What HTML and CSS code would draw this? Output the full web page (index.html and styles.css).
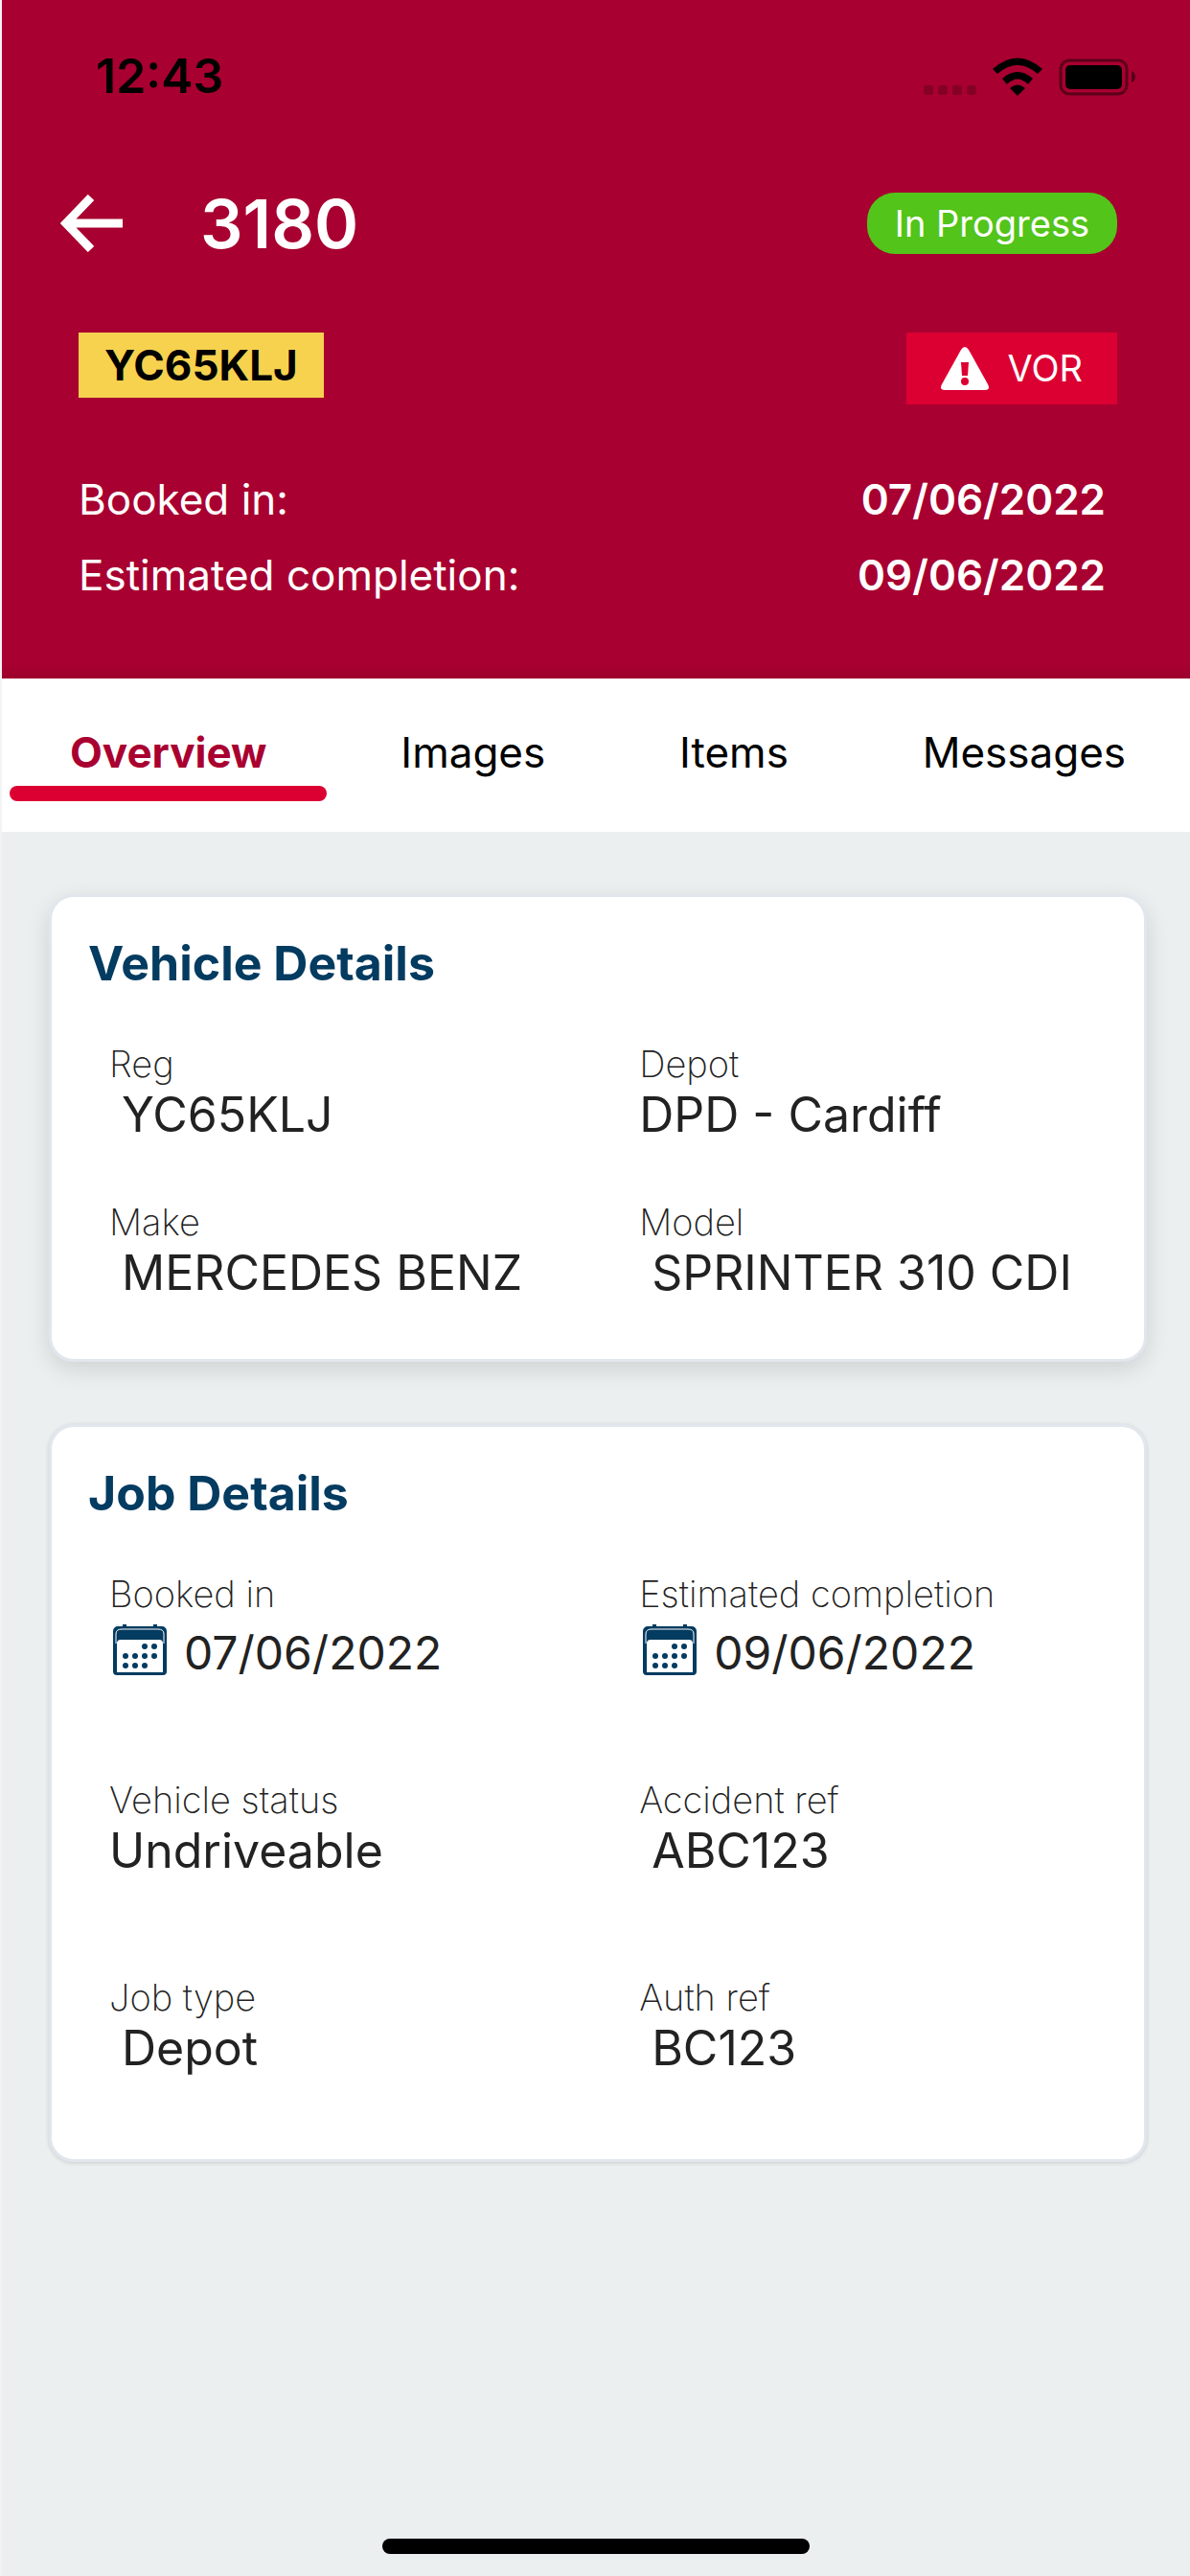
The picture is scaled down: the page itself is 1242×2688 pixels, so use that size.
FILE: index.html
```html
<!DOCTYPE html>
<html lang="en">
<head>
  <meta charset="UTF-8">
  <meta name="viewport" content="width=device-width, initial-scale=1">
  <title>Job 3180</title>
  <link rel="stylesheet" href="styles.css">
</head>
<body>
  <svg class="sprite" aria-hidden="true">
    <symbol id="calendar" viewBox="0 0 56 54">
      <path fill="#043b60" d="M10 0h4v2h28V0h4v2h5a5 5 0 0 1 5 5v42a4 4 0 0 1-4 4H4a4 4 0 0 1-4-4V7a5 5 0 0 1 5-5h5z"/>
      <path fill="#fff" d="M4 20q0-4 4-4h40q4 0 4 4v30H4z"/>
      <path fill="none" stroke="#fff" d="M3 20V10q0-5 6-5h38q6 0 6 5v10"/>
      <g fill="#043b60">
        <circle cx="33" cy="23" r="3"/><circle cx="43" cy="23" r="3"/>
        <circle cx="13" cy="33" r="3"/><circle cx="23" cy="33" r="3"/><circle cx="33" cy="33" r="3"/><circle cx="43" cy="33" r="3"/>
        <circle cx="13" cy="43" r="3"/><circle cx="23" cy="43" r="3"/><circle cx="33" cy="43" r="3"/>
      </g>
    </symbol>
  </svg>

  <header class="header">
    <div class="status-bar">
      <span class="time">12:43</span>
      <svg class="status-icons" viewBox="0 0 222 50" aria-hidden="true">
        <g opacity=".2">
          <rect x="0" y="35" width="10" height="10" rx="3"/>
          <rect x="15" y="35" width="10" height="10" rx="3"/>
          <rect x="30" y="35" width="10" height="10" rx="3"/>
          <rect x="45" y="35" width="10" height="10" rx="3"/>
        </g>
        <path d="M72 18Q98-5 124 18L119 23Q98 5 77 23z"/>
        <path d="M82 28Q98 14 114 28L109 34Q98 23 87 34z"/>
        <path d="M90 38Q98 31 106 38L98 46z"/>
        <rect x="143" y="9" width="69" height="35" rx="9" fill="none" stroke="#000" stroke-width="3" opacity=".45"/>
        <rect x="148" y="14" width="59" height="25" rx="5"/>
        <path d="M217 20q4 2 4 6t-4 6z" opacity=".5"/>
      </svg>
    </div>

    <div class="title-row">
      <button class="back" type="button" aria-label="Back">
        <svg viewBox="0 0 66 60" aria-hidden="true">
          <path d="M32 3L6 30l26 27M6 30h59" fill="none" stroke="#fff" stroke-width="9"/>
        </svg>
      </button>
      <h1>3180</h1>
      <span class="progress">In Progress</span>
    </div>

    <div class="tag-row">
      <span class="plate">YC65KLJ</span>
      <span class="vor">
        <svg viewBox="0 0 50 46" aria-hidden="true">
          <path fill="#fff" d="M21 3q4-6 8 0l20 36q3 6-3 6H4q-6 0-3-6z"/>
          <path fill="#dc0032" d="M21 16h8l-1 14h-6z"/>
          <circle cx="25" cy="36" r="4" fill="#dc0032"/>
        </svg>
        VOR
      </span>
    </div>

    <dl class="dates">
      <div><dt>Booked in:</dt><dd>07/06/2022</dd></div>
      <div><dt>Estimated completion:</dt><dd>09/06/2022</dd></div>
    </dl>
  </header>

  <nav class="tabs">
    <a class="tab active" href="#overview">Overview</a>
    <a class="tab" href="#images">Images</a>
    <a class="tab" href="#items">Items</a>
    <a class="tab" href="#messages">Messages</a>
  </nav>

  <main class="content" id="overview">
    <section class="card raised">
      <h2>Vehicle Details</h2>
      <dl class="details">
        <div><dt>Reg</dt><dd class="indent">YC65KLJ</dd></div>
        <div><dt>Depot</dt><dd>DPD - Cardiff</dd></div>
        <div><dt>Make</dt><dd class="indent">MERCEDES BENZ</dd></div>
        <div><dt>Model</dt><dd class="indent">SPRINTER 310 CDI</dd></div>
      </dl>
    </section>

    <section class="card">
      <h2>Job Details</h2>
      <dl class="details job">
        <div><dt>Booked in</dt><dd class="date"><svg aria-hidden="true"><use href="#calendar"/></svg>07/06/2022</dd></div>
        <div><dt>Estimated completion</dt><dd class="date"><svg aria-hidden="true"><use href="#calendar"/></svg>09/06/2022</dd></div>
        <div><dt>Vehicle status</dt><dd>Undriveable</dd></div>
        <div><dt>Accident ref</dt><dd class="indent">ABC123</dd></div>
        <div><dt>Job type</dt><dd class="indent">Depot</dd></div>
        <div><dt>Auth ref</dt><dd class="indent">BC123</dd></div>
      </dl>
    </section>
  </main>

  <div class="home-bar"></div>
</body>
</html>
```

FILE: styles.css
```css
* {
  box-sizing: border-box;
}

body {
  margin: 0;
  min-height: 100vh;
  display: flex;
  flex-direction: column;
  font-family: Inter, "Liberation Sans", sans-serif;
  background: #ebeff0;
  border-left: 2px solid #f3f3f4;
  color: #222;
}

h1, h2, dl, dd {
  margin: 0;
}

.sprite {
  display: none;
}

/* header */
.header {
  background: linear-gradient(#a80030 98%, #9c002d);
  color: #fff;
  padding: 49px 76px 68px 80px;
}

.status-bar {
  display: flex;
  justify-content: space-between;
  align-items: center;
  height: 60px;
  margin: 0 -20px 0 18px;
  color: #000;
}

.time {
  font-size: 50px;
  font-weight: 600;
}

.status-icons {
  width: 222px;
  height: 50px;
}

.title-row {
  display: flex;
  align-items: center;
  height: 84px;
  margin-top: 82px;
}

.back {
  width: 66px;
  height: 60px;
  margin-left: -19px;
  padding: 0;
  border: 0;
  background: none;
}

.back svg {
  display: block;
  width: 66px;
  height: 60px;
}

h1 {
  margin-left: 80px;
  font-size: 70px;
  font-weight: 600;
}

.progress {
  margin-left: auto;
  padding: 0 29px;
  border-radius: 29px;
  background: #52c41a;
  font-size: 38px;
  line-height: 64px;
}

.tag-row {
  display: flex;
  justify-content: space-between;
  align-items: flex-start;
  margin-top: 72px;
}

.plate {
  padding: 0 27px;
  background: #f7d24f;
  color: #000;
  font-size: 44px;
  font-weight: 700;
  line-height: 68px;
}

.vor {
  display: flex;
  align-items: center;
  gap: 20px;
  padding: 0 36px;
  background: #dc0032;
  font-size: 38px;
  line-height: 75px;
}

.vor svg {
  width: 50px;
  height: 46px;
}

.dates {
  margin-top: 60px;
  padding-right: 12px;
  font-size: 44px;
  line-height: 79px;
}

.dates div {
  display: flex;
  justify-content: space-between;
}

.dates dd {
  font-weight: 600;
}

/* tabs */
.tabs {
  display: flex;
  gap: 14px;
  padding: 50px 4px 32px 8px;
  background: #fff;
}

.tab {
  flex: auto;
  color: #000;
  font-size: 44px;
  line-height: 54px;
  text-align: center;
  text-decoration: none;
}

.tab::after {
  content: "";
  display: block;
  height: 16px;
  margin-top: 8px;
  border-radius: 8px;
}

.tab.active {
  color: #a90030;
  font-weight: 700;
}

.tab.active::after {
  background: #dc0032;
}

/* cards */
.content {
  display: flex;
  flex-direction: column;
  gap: 65px;
  padding: 65px 45px 60px 49px;
}

.card {
  padding: 39px 0 86px 38px;
  border: 3px solid #e1e7ed;
  border-radius: 26px;
  background: #fff;
  box-shadow: 0 1px 4px rgba(0, 0, 0, 0.15);
}

.card.raised {
  padding-bottom: 60px;
  box-shadow: 0 8px 24px rgba(0, 0, 0, 0.12);
}

h2 {
  color: #043b60;
  font-size: 50px;
  font-weight: 700;
  line-height: 60px;
}

.details {
  display: grid;
  grid-template-columns: 1.05fr 1fr;
  row-gap: 59px;
  margin-top: 52px;
  padding-left: 22px;
}

.details.job {
  row-gap: 100px;
}

.details dt {
  font-size: 38px;
  font-weight: 200;
  line-height: 46px;
}

.details dd {
  font-size: 50px;
  line-height: 60px;
}

.details .indent {
  padding-left: 13px;
}

.details .date {
  display: flex;
  gap: 18px;
  padding: 9px 0 0 4px;
  font-size: 48px;
}

.date svg {
  width: 56px;
  height: 54px;
}

.home-bar {
  width: 36%;
  height: 16px;
  margin: auto auto 23px;
  border-radius: 8px;
  background: #000;
}
```
